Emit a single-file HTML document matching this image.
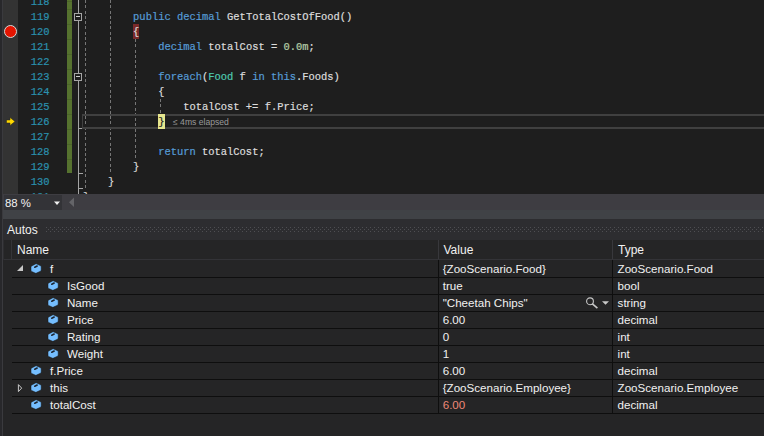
<!DOCTYPE html>
<html><head><meta charset="utf-8">
<style>
*{margin:0;padding:0;box-sizing:border-box}
html,body{width:764px;height:436px;overflow:hidden;background:#1e1e1e}
body{position:relative;font-family:"Liberation Sans",sans-serif}
.a{position:absolute}
.mono{font-family:"Liberation Mono",monospace}
.ln{position:absolute;margin-top:1px;left:19.5px;-webkit-text-stroke:0.2px #2b91af;width:30px;text-align:right;color:#2b91af;font-family:"Liberation Mono",monospace;font-size:10.45px;line-height:15px;height:15px;white-space:pre}
.cl{position:absolute;margin-top:1px;-webkit-text-stroke:0.2px currentColor;left:83px;color:#dcdcdc;font-family:"Liberation Mono",monospace;font-size:10.45px;line-height:15px;height:15px;white-space:pre}
.k{color:#569cd6}.t{color:#4ec9b0}.n{color:#b5cea8}
.gd{position:absolute;width:1px;background:repeating-linear-gradient(to bottom,#767676 0 3px,transparent 3px 5.28px)}
.ui{font-family:"Liberation Sans",sans-serif;font-size:11.6px;color:#f1f1f1;white-space:pre;position:absolute;line-height:17px}
.sep{position:absolute;left:12px;width:752px;height:1px;background:#0e0e0e}
</style></head><body>
<!-- editor left strips -->
<div class="a" style="left:0;top:0;width:2px;height:194px;background:#2d2d30"></div>
<div class="a" style="left:2px;top:0;width:1px;height:194px;background:#3e3e42"></div>
<div class="a" style="left:3px;top:0;width:15px;height:194px;background:#333333"></div>

<!-- breakpoint -->
<div class="a" style="left:4px;top:24.5px;width:13px;height:13px;border-radius:50%;background:#e51400;border:1px solid #d8d8d8"></div>
<!-- arrow -->
<svg class="a" style="left:0;top:110px" width="20" height="20"><path d="M6.5 10 H10 V7.5 L15 11.5 L10 15.5 V13 H6.5 Z" fill="#ffd800" stroke="#2a2a1a" stroke-width="0.5"/></svg>

<!-- line numbers -->
<div class="ln" style="top:-6px">118</div>
<div class="ln" style="top:9px">119</div>
<div class="ln" style="top:24px">120</div>
<div class="ln" style="top:39px">121</div>
<div class="ln" style="top:54px">122</div>
<div class="ln" style="top:69px">123</div>
<div class="ln" style="top:84px">124</div>
<div class="ln" style="top:99px">125</div>
<div class="ln" style="top:114px">126</div>
<div class="ln" style="top:129px">127</div>
<div class="ln" style="top:144px">128</div>
<div class="ln" style="top:159px">129</div>
<div class="ln" style="top:174px">130</div>
<div class="ln" style="top:189px">131</div>

<!-- change bar -->
<div class="a" style="left:67px;top:0;width:5px;height:173px;background:repeating-linear-gradient(to bottom,#4c6529 0 1px,#56722f 1px 15px);background-position:0 9px"></div>

<!-- outline -->
<div class="a" style="left:78px;top:0;width:1px;height:194px;background:#a5a5a5"></div>


<!-- collapse boxes -->
<div class="a" style="left:74px;top:13px;width:8px;height:8px;background:#1e1e1e;border:1px solid #a5a5a5"></div>
<div class="a" style="left:76px;top:16px;width:4px;height:1px;background:#d0d0d0"></div>
<div class="a" style="left:74px;top:73px;width:8px;height:8px;background:#1e1e1e;border:1px solid #a5a5a5"></div>
<div class="a" style="left:76px;top:76px;width:4px;height:1px;background:#d0d0d0"></div>
<!-- ticks -->
<div class="a" style="left:78px;top:128px;width:5px;height:1px;background:#a5a5a5"></div>
<div class="a" style="left:78px;top:173px;width:5px;height:1px;background:#a5a5a5"></div>
<div class="a" style="left:78px;top:188px;width:5px;height:1px;background:#a5a5a5"></div>

<!-- indent guides -->
<div class="gd" style="left:85px;top:0;height:189px"></div>
<div class="gd" style="left:110px;top:0;height:174px"></div>
<div class="gd" style="left:135px;top:39px;height:120px"></div>
<div class="gd" style="left:160px;top:99px;height:15px"></div>

<!-- current line box -->
<div class="a" style="left:82px;top:114px;width:682px;height:15px;border-top:2px solid #404040;border-bottom:2px solid #404040;border-left:1px solid #404040"></div>

<!-- brace highlights -->
<div class="a" style="left:133px;top:24px;width:6.3px;height:15px;background:#7a2a2a"></div>
<div class="a" style="left:158px;top:114px;width:7px;height:15px;background:#e6e68e"></div>

<!-- code -->
<div class="cl" style="top:9px">        <span class="k">public</span> <span class="k">decimal</span> GetTotalCostOfFood()</div>
<div class="cl" style="top:24px">        {</div>
<div class="cl" style="top:39px">            <span class="k">decimal</span> totalCost = <span class="n">0.0m</span>;</div>
<div class="cl" style="top:69px">            <span class="k">foreach</span>(<span class="t">Food</span> f <span class="k">in</span> <span class="k">this</span>.Foods)</div>
<div class="cl" style="top:84px">            {</div>
<div class="cl" style="top:99px">                totalCost += f.Price;</div>
<div class="cl" style="top:114px">            <span style="color:#1e1e1e">}</span></div>
<div class="cl" style="top:144px">            <span class="k">return</span> totalCost;</div>
<div class="cl" style="top:159px">        }</div>
<div class="cl" style="top:174px">    }</div>
<div class="cl" style="top:189px">}</div>
<div class="a" style="left:173px;top:114.7px;line-height:15px;font-size:8.6px;color:#9a9a9a;white-space:pre">≤ 4ms elapsed</div>

<!-- zoom bar -->
<div class="a" style="left:0;top:194px;width:764px;height:16px;background:#3e3d42"></div>
<div class="a" style="left:0;top:210px;width:764px;height:9px;background:#404246"></div>
<div class="a" style="left:4px;top:195px;width:58px;height:15px;background:#333337"></div>
<div class="ui" style="left:5px;top:195px;line-height:16px;font-size:11.4px">88 %</div>
<svg class="a" style="left:54px;top:201px" width="7" height="5"><path d="M0 0.5H6L3 4Z" fill="#f1f1f1"/></svg>
<svg class="a" style="left:68px;top:197px" width="7" height="11"><path d="M6 0.5V10L1 5.25Z" fill="#646468"/></svg>

<!-- autos title -->
<div class="a" style="left:0;top:219px;width:764px;height:217px;background:#2d2d30"></div>
<div class="ui" style="left:7px;top:220px;line-height:21px;font-size:12px">Autos</div>
<svg class="a" style="left:46px;top:227px" width="718" height="5"><defs><pattern id="gp" width="4" height="4" patternUnits="userSpaceOnUse"><rect x="0" y="0" width="1" height="1" fill="#4e4e52"/><rect x="2" y="2" width="1" height="1" fill="#4e4e52"/></pattern></defs><rect width="718" height="5" fill="url(#gp)"/></svg>


<!-- autos grid -->
<div class="a" style="left:3px;top:240px;width:761px;height:196px;background:#252526"></div>
<div class="a" style="left:3px;top:240px;width:1px;height:20px;background:#2d2d30"></div>
<div class="a" style="left:4px;top:259px;width:760px;height:1px;background:#333337"></div>
<div class="a" style="left:11px;top:240px;width:1px;height:19px;background:#343438"></div>
<div class="a" style="left:438px;top:240px;width:1px;height:19px;background:#38383c"></div>
<div class="a" style="left:612px;top:240px;width:1px;height:19px;background:#38383c"></div>
<div class="ui" style="left:17px;top:242px;font-size:12px">Name</div>
<div class="ui" style="left:443.5px;top:242px;font-size:12px">Value</div>
<div class="ui" style="left:618px;top:242px;font-size:12px">Type</div>
<div class="a" style="left:438px;top:260px;width:1px;height:153px;background:#0e0e0e"></div>
<div class="a" style="left:612px;top:260px;width:1px;height:153px;background:#0e0e0e"></div>
<div class="sep" style="top:277px"></div>
<svg class="a" style="left:30px;top:263px" width="12" height="11" viewBox="0 0 12 11"><path d="M1 4.1 Q1 3.4 1.7 3 L5.5 1 Q6.1 0.7 6.8 1 L10.5 2.7 Q11.2 3.1 11.2 3.8 V7.1 Q11.2 7.8 10.5 8.2 L6.5 10.1 Q5.8 10.4 5.1 10.1 L1.7 8.5 Q1 8.1 1 7.4 Z" fill="#75beff" stroke="#161616" stroke-width="0.5"/><path d="M4.8 4.2 L7.1 3.1" stroke="#1c2633" stroke-width="1.7" stroke-linecap="round"/></svg>
<svg class="a" style="left:16px;top:264px" width="8" height="8"><path d="M7 1 V7 H1 Z" fill="#c8c8c8"/></svg>
<div class="ui" style="left:50px;top:260px">f</div>
<div class="ui" style="left:442.7px;top:260px;">{ZooScenario.Food}</div>
<div class="ui" style="left:617.6px;top:260px">ZooScenario.Food</div>
<div class="sep" style="top:294px"></div>
<svg class="a" style="left:47px;top:280px" width="12" height="11" viewBox="0 0 12 11"><path d="M1 4.1 Q1 3.4 1.7 3 L5.5 1 Q6.1 0.7 6.8 1 L10.5 2.7 Q11.2 3.1 11.2 3.8 V7.1 Q11.2 7.8 10.5 8.2 L6.5 10.1 Q5.8 10.4 5.1 10.1 L1.7 8.5 Q1 8.1 1 7.4 Z" fill="#75beff" stroke="#161616" stroke-width="0.5"/><path d="M4.8 4.2 L7.1 3.1" stroke="#1c2633" stroke-width="1.7" stroke-linecap="round"/></svg>
<div class="ui" style="left:67px;top:277px">IsGood</div>
<div class="ui" style="left:442.7px;top:277px;">true</div>
<div class="ui" style="left:617.6px;top:277px">bool</div>
<div class="sep" style="top:311px"></div>
<svg class="a" style="left:47px;top:297px" width="12" height="11" viewBox="0 0 12 11"><path d="M1 4.1 Q1 3.4 1.7 3 L5.5 1 Q6.1 0.7 6.8 1 L10.5 2.7 Q11.2 3.1 11.2 3.8 V7.1 Q11.2 7.8 10.5 8.2 L6.5 10.1 Q5.8 10.4 5.1 10.1 L1.7 8.5 Q1 8.1 1 7.4 Z" fill="#75beff" stroke="#161616" stroke-width="0.5"/><path d="M4.8 4.2 L7.1 3.1" stroke="#1c2633" stroke-width="1.7" stroke-linecap="round"/></svg>
<div class="ui" style="left:67px;top:294px">Name</div>
<div class="ui" style="left:442.7px;top:294px;">"Cheetah Chips"</div>
<div class="ui" style="left:617.6px;top:294px">string</div>
<svg class="a" style="left:584px;top:296px" width="28" height="14"><circle cx="6" cy="5.3" r="3.4" fill="none" stroke="#c8c8c8" stroke-width="1.1"/><path d="M8.4 7.8 L13.4 12.2" stroke="#c8c8c8" stroke-width="1.6"/><path d="M18 5.3 H25 L21.5 8.7 Z" fill="#c8c8c8"/></svg>
<div class="sep" style="top:328px"></div>
<svg class="a" style="left:47px;top:314px" width="12" height="11" viewBox="0 0 12 11"><path d="M1 4.1 Q1 3.4 1.7 3 L5.5 1 Q6.1 0.7 6.8 1 L10.5 2.7 Q11.2 3.1 11.2 3.8 V7.1 Q11.2 7.8 10.5 8.2 L6.5 10.1 Q5.8 10.4 5.1 10.1 L1.7 8.5 Q1 8.1 1 7.4 Z" fill="#75beff" stroke="#161616" stroke-width="0.5"/><path d="M4.8 4.2 L7.1 3.1" stroke="#1c2633" stroke-width="1.7" stroke-linecap="round"/></svg>
<div class="ui" style="left:67px;top:311px">Price</div>
<div class="ui" style="left:442.7px;top:311px;">6.00</div>
<div class="ui" style="left:617.6px;top:311px">decimal</div>
<div class="sep" style="top:345px"></div>
<svg class="a" style="left:47px;top:331px" width="12" height="11" viewBox="0 0 12 11"><path d="M1 4.1 Q1 3.4 1.7 3 L5.5 1 Q6.1 0.7 6.8 1 L10.5 2.7 Q11.2 3.1 11.2 3.8 V7.1 Q11.2 7.8 10.5 8.2 L6.5 10.1 Q5.8 10.4 5.1 10.1 L1.7 8.5 Q1 8.1 1 7.4 Z" fill="#75beff" stroke="#161616" stroke-width="0.5"/><path d="M4.8 4.2 L7.1 3.1" stroke="#1c2633" stroke-width="1.7" stroke-linecap="round"/></svg>
<div class="ui" style="left:67px;top:328px">Rating</div>
<div class="ui" style="left:442.7px;top:328px;">0</div>
<div class="ui" style="left:617.6px;top:328px">int</div>
<div class="sep" style="top:362px"></div>
<svg class="a" style="left:47px;top:348px" width="12" height="11" viewBox="0 0 12 11"><path d="M1 4.1 Q1 3.4 1.7 3 L5.5 1 Q6.1 0.7 6.8 1 L10.5 2.7 Q11.2 3.1 11.2 3.8 V7.1 Q11.2 7.8 10.5 8.2 L6.5 10.1 Q5.8 10.4 5.1 10.1 L1.7 8.5 Q1 8.1 1 7.4 Z" fill="#75beff" stroke="#161616" stroke-width="0.5"/><path d="M4.8 4.2 L7.1 3.1" stroke="#1c2633" stroke-width="1.7" stroke-linecap="round"/></svg>
<div class="ui" style="left:67px;top:345px">Weight</div>
<div class="ui" style="left:442.7px;top:345px;">1</div>
<div class="ui" style="left:617.6px;top:345px">int</div>
<div class="sep" style="top:379px"></div>
<svg class="a" style="left:30px;top:365px" width="12" height="11" viewBox="0 0 12 11"><path d="M1 4.1 Q1 3.4 1.7 3 L5.5 1 Q6.1 0.7 6.8 1 L10.5 2.7 Q11.2 3.1 11.2 3.8 V7.1 Q11.2 7.8 10.5 8.2 L6.5 10.1 Q5.8 10.4 5.1 10.1 L1.7 8.5 Q1 8.1 1 7.4 Z" fill="#75beff" stroke="#161616" stroke-width="0.5"/><path d="M4.8 4.2 L7.1 3.1" stroke="#1c2633" stroke-width="1.7" stroke-linecap="round"/></svg>
<div class="ui" style="left:50px;top:362px">f.Price</div>
<div class="ui" style="left:442.7px;top:362px;">6.00</div>
<div class="ui" style="left:617.6px;top:362px">decimal</div>
<div class="sep" style="top:396px"></div>
<svg class="a" style="left:30px;top:382px" width="12" height="11" viewBox="0 0 12 11"><path d="M1 4.1 Q1 3.4 1.7 3 L5.5 1 Q6.1 0.7 6.8 1 L10.5 2.7 Q11.2 3.1 11.2 3.8 V7.1 Q11.2 7.8 10.5 8.2 L6.5 10.1 Q5.8 10.4 5.1 10.1 L1.7 8.5 Q1 8.1 1 7.4 Z" fill="#75beff" stroke="#161616" stroke-width="0.5"/><path d="M4.8 4.2 L7.1 3.1" stroke="#1c2633" stroke-width="1.7" stroke-linecap="round"/></svg>
<svg class="a" style="left:16px;top:383px" width="8" height="10"><path d="M2.4 1.6 V8.6 L5.7 5.1 Z" fill="#252526" stroke="#c8c8c8" stroke-width="1" stroke-linejoin="round"/></svg>
<div class="ui" style="left:50px;top:379px">this</div>
<div class="ui" style="left:442.7px;top:379px;">{ZooScenario.Employee}</div>
<div class="ui" style="left:617.6px;top:379px">ZooScenario.Employee</div>
<div class="sep" style="top:413px"></div>
<svg class="a" style="left:30px;top:399px" width="12" height="11" viewBox="0 0 12 11"><path d="M1 4.1 Q1 3.4 1.7 3 L5.5 1 Q6.1 0.7 6.8 1 L10.5 2.7 Q11.2 3.1 11.2 3.8 V7.1 Q11.2 7.8 10.5 8.2 L6.5 10.1 Q5.8 10.4 5.1 10.1 L1.7 8.5 Q1 8.1 1 7.4 Z" fill="#75beff" stroke="#161616" stroke-width="0.5"/><path d="M4.8 4.2 L7.1 3.1" stroke="#1c2633" stroke-width="1.7" stroke-linecap="round"/></svg>
<div class="ui" style="left:50px;top:396px">totalCost</div>
<div class="ui" style="left:442.7px;top:396px; color:#ee8877;">6.00</div>
<div class="ui" style="left:617.6px;top:396px">decimal</div>
<!-- far left strip -->
<div class="a" style="left:0;top:0;width:2px;height:436px;background:#28282b"></div>
<div class="a" style="left:2px;top:0;width:1px;height:436px;background:#3a3a3e"></div>
</body></html>
